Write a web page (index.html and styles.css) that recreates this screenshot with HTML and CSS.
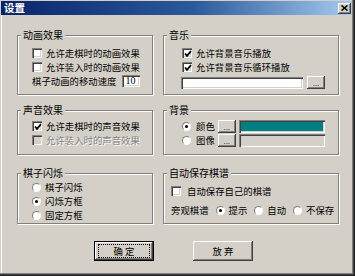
FILE: index.html
```html
<!DOCTYPE html>
<html>
<head>
<meta charset="utf-8">
<title>设置</title>
<link rel="stylesheet" href="styles.css">
</head>
<body>
<div class="win">
  <div class="titlebar">
    <span class="title">设置</span>
    <span class="close"><svg width="7" height="6" viewBox="0 0 7 6"><path d="M0.5 0.5 L6.5 5.5 M6.5 0.5 L0.5 5.5" stroke="#000" stroke-width="1.6" fill="none"/></svg></span>
  </div>
  <div class="body">
    <div class="grid">
      <div class="group g1 pad-anim">
        <span class="gtitle">动画效果</span>
        <div class="row"><span class="cb"></span><span>允许走棋时的动画效果</span></div>
        <div class="row"><span class="cb"></span><span>允许装入时的动画效果</span></div>
        <div class="row"><span>棋子动画的移动速度</span><span class="field num">10</span></div>
      </div>
      <div class="group g1 pad-music">
        <span class="gtitle">音乐</span>
        <div class="row"><span class="cb on"><svg width="8" height="8" viewBox="0 0 8 8"><path d="M1 3.5 L3 5.8 L7 1.2" stroke="#000" stroke-width="1.8" fill="none"/></svg></span><span>允许背景音乐播放</span></div>
        <div class="row"><span class="cb on"><svg width="8" height="8" viewBox="0 0 8 8"><path d="M1 3.5 L3 5.8 L7 1.2" stroke="#000" stroke-width="1.8" fill="none"/></svg></span><span>允许背景音乐循环播放</span></div>
        <div class="row file-row"><span class="field path"></span><span class="btn dots">...</span></div>
      </div>
      <div class="group g2 pad-sound">
        <span class="gtitle">声音效果</span>
        <div class="row"><span class="cb on"><svg width="8" height="8" viewBox="0 0 8 8"><path d="M1 3.5 L3 5.8 L7 1.2" stroke="#000" stroke-width="1.8" fill="none"/></svg></span><span>允许走棋时的声音效果</span></div>
        <div class="row disabled"><span class="cb off"></span><span>允许装入时的声音效果</span></div>
      </div>
      <div class="group g2 pad-bg">
        <span class="gtitle">背景</span>
        <div class="row bg-row"><span class="rb on"></span><span class="lbl2">颜色</span><span class="btn dots">...</span><span class="swatch teal"></span></div>
        <div class="row bg-row"><span class="rb"></span><span class="lbl2">图像</span><span class="btn dots">...</span><span class="swatch empty"></span></div>
      </div>
      <div class="group g3 pad-flash">
        <span class="gtitle">棋子闪烁</span>
        <div class="row"><span class="rb"></span><span>棋子闪烁</span></div>
        <div class="row"><span class="rb on"></span><span>闪烁方框</span></div>
        <div class="row"><span class="rb"></span><span>固定方框</span></div>
      </div>
      <div class="group g3 pad-save">
        <span class="gtitle">自动保存棋谱</span>
        <div class="row save1"><span class="cb"></span><span>自动保存自己的棋谱</span></div>
        <div class="row save2">
          <span class="watch">旁观棋谱</span>
          <span class="opt"><span class="rb on"></span><span>提示</span></span>
          <span class="opt"><span class="rb"></span><span>自动</span></span>
          <span class="opt"><span class="rb"></span><span>不保存</span></span>
        </div>
      </div>
    </div>
    <div class="actions">
      <span class="btn big default"><span class="focus">确 定</span></span>
      <span class="btn big">放 弃</span>
    </div>
  </div>
</div>
</body>
</html>
```
FILE: styles.css
```css
html, body {
  margin: 0;
  padding: 0;
  background: #d4d0c8;
}
body {
  font-family: "Noto Sans CJK SC", "Noto Sans", sans-serif;
  font-size: 9.4px;
  color: #000;
}
.win {
  width: 355px;
  height: 276px;
  box-sizing: border-box;
  background: #d4d0c8;
  box-shadow: inset -1px -1px #202020, inset -2px -2px #404040, inset -3px -3px #808080, inset 1px 1px #d4d0c8, inset 2px 2px #fff;
  overflow: hidden;
}
.titlebar {
  margin: 1px 3px 0 1px;
  height: 14px;
  background: linear-gradient(to right, #0a246a, #2a5a9a 55%, #a6caf0);
  display: flex;
  align-items: center;
  justify-content: space-between;
}
.title {
  color: #fff;
  font-weight: bold;
  font-size: 10.5px;
  line-height: 14px;
  padding-left: 3px;
}
.close {
  width: 13px;
  height: 11px;
  margin-right: 1px;
  box-sizing: border-box;
  background: #d4d0c8;
  box-shadow: inset -1px -1px #404040, inset 1px 1px #fff, inset -2px -2px #808080;
  display: flex;
  align-items: center;
  justify-content: center;
}
.close svg { display: block; }
.body {
  padding: 20px 0 0 17px;
}
.grid {
  display: grid;
  grid-template-columns: 136px 176px;
  column-gap: 10px;
}
.group {
  position: relative;
  box-sizing: border-box;
  border: 1px solid #808080;
  box-shadow: inset 1px 1px #fff, 1px 1px #fff;
}
.gtitle {
  position: absolute;
  top: -7px;
  left: 3px;
  padding: 0 2px;
  background: #d4d0c8;
  font-size: 10px;
  line-height: 12px;
  white-space: nowrap;
}
.g1 { height: 60px; }
.g2 { height: 45px; margin-top: 15px; }
.g3 { height: 51px; margin-top: 18px; }
.pad-anim { padding: 10px 0 0 14px; }
.pad-music { padding: 10px 0 0 18px; }
.pad-sound { padding: 8px 0 0 14px; }
.pad-bg { padding: 8px 0 0 18px; }
.pad-flash { padding: 6px 0 0 14px; }
.pad-save { padding: 10px 0 0 7px; }

.row {
  display: flex;
  align-items: center;
  height: 14px;
  gap: 4px;
  white-space: nowrap;
  line-height: 14px;
}
.cb {
  width: 10px;
  height: 10px;
  flex: none;
  box-sizing: border-box;
  background: #fff;
  box-shadow: inset 1px 1px #808080, inset 2px 2px #404040, inset -1px -1px #fff, inset -2px -2px #d4d0c8;
  display: flex;
  align-items: center;
  justify-content: center;
}
.cb svg { display: block; margin: 1px 0 0 1px; }
.cb.off { background: #d4d0c8; }
.disabled { color: #808080; text-shadow: 1px 1px 0 #fff; }
.rb {
  width: 9px;
  height: 9px;
  flex: none;
  box-sizing: border-box;
  border-radius: 50%;
  background: #fff;
  border: 1px solid;
  border-color: #808080 #fff #fff #808080;
  position: relative;
}
.rb.on::after {
  content: "";
  position: absolute;
  left: 2px;
  top: 2px;
  width: 3px;
  height: 3px;
  border-radius: 50%;
  background: #000;
}
.field {
  box-sizing: border-box;
  background: #fff;
  box-shadow: inset 1px 1px #808080, inset 2px 2px #404040, inset -1px -1px #fff, inset -2px -2px #d4d0c8;
}
.num {
  width: 18px;
  height: 12px;
  margin-left: 2px;
  font-family: "Liberation Serif", serif;
  font-size: 10px;
  line-height: 12px;
  padding-left: 3px;
}
.file-row {
  margin-top: 2px;
  margin-left: -1px;
  height: 13px;
  gap: 4px;
}
.path { width: 122px; height: 12px; }
.btn {
  box-sizing: border-box;
  background: #d4d0c8;
  box-shadow: inset -1px -1px #404040, inset 1px 1px #fff, inset -2px -2px #808080;
  display: flex;
  align-items: center;
  justify-content: center;
}
.dots {
  width: 18px;
  height: 13px;
  font-family: "Liberation Sans", sans-serif;
  font-size: 8px;
  line-height: 8px;
  padding-top: 3px;
  letter-spacing: 0;
}
.bg-row { gap: 0; }
.bg-row .lbl2 { margin: 0 3px 0 5px; }
.bg-row .swatch { margin-left: 3px; }
.swatch {
  width: 86px;
  height: 13px;
  box-sizing: border-box;
  box-shadow: inset 1px 1px #808080, inset 2px 2px #404040, inset -1px -1px #fff, inset -2px -2px #d4d0c8;
}
.teal { background: #008080; }
.empty { background: #d4d0c8; }
.save1 { gap: 6px; }
.save2 { margin-top: 5px; gap: 7px; }
.opt { display: flex; align-items: center; gap: 4px; }
.actions {
  display: flex;
  gap: 39px;
  margin-top: 17px;
  padding-left: 77px;
}
.big {
  width: 60px;
  height: 20px;
  font-size: 9.4px;
}
.default {
  box-shadow: inset 0 0 0 1px #000, inset -2px -2px #404040, inset 2px 2px #fff, inset -3px -3px #808080;
}
.focus {
  width: 52px;
  height: 14px;
  box-sizing: border-box;
  border: 1px dotted #000;
  display: flex;
  align-items: center;
  justify-content: center;
}
```
